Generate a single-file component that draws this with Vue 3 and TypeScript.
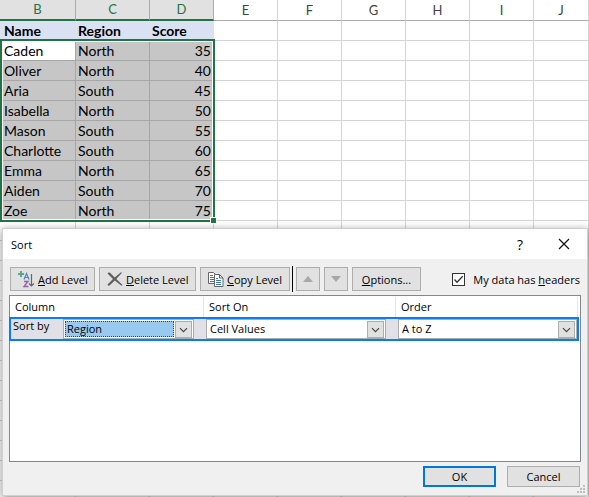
<script setup lang="ts">
import { ref } from 'vue'

const letters = ['B', 'C', 'D', 'E', 'F', 'G', 'H', 'I', 'J']
const people: [string, string, number][] = [
  ['Caden', 'North', 35],
  ['Oliver', 'North', 40],
  ['Aria', 'South', 45],
  ['Isabella', 'North', 50],
  ['Mason', 'South', 55],
  ['Charlotte', 'South', 60],
  ['Emma', 'North', 65],
  ['Aiden', 'South', 70],
  ['Zoe', 'North', 75],
]
const emptyRows = 14
const column = ref('Region')
const sortOn = ref('Cell Values')
const order = ref('A to Z')
const hasHeaders = ref(true)
</script>

<template>
  <main class="workbook">
    <table class="sheet">
      <colgroup>
        <col class="col-name" />
        <col class="col-region" />
        <col v-for="n in 6" :key="n" class="col-std" />
        <col />
      </colgroup>
      <thead>
        <tr>
          <th v-for="(l, i) in letters" :key="l" scope="col" :class="{ picked: i < 3 }">{{ l }}</th>
        </tr>
      </thead>
      <tbody>
        <tr class="titles">
          <td>Name</td><td>Region</td><td>Score</td>
          <td v-for="n in 6" :key="n"></td>
        </tr>
        <tr v-for="(p, r) in people" :key="p[0]">
          <td v-for="(v, c) in p" :key="c" class="sel" :class="{ active: r === 0 && c === 0, num: c === 2 }">{{ v }}</td>
          <td v-for="n in 6" :key="'e' + n"></td>
        </tr>
        <tr v-for="r in emptyRows" :key="r">
          <td v-for="n in 9" :key="n"></td>
        </tr>
      </tbody>
    </table>
    <div class="range"><span class="handle"></span></div>

    <section class="dialog" role="dialog" aria-labelledby="sort-title">
      <header class="titlebar">
        <h1 id="sort-title">Sort</h1>
        <button class="plain help" type="button">?</button>
        <button class="plain" type="button" aria-label="Close">
          <svg width="12" height="12" viewBox="0 0 12 12"><path d="M1 1 11 11M11 1 1 11" stroke="#111" stroke-width="1.2" fill="none" /></svg>
        </button>
      </header>

      <div class="toolbar">
        <button class="btn icon add" type="button">
          <svg width="17" height="18" viewBox="0 0 17 18" fill="none">
            <path d="M3 1v6M0 4h6" stroke="#5fa58c" stroke-width="2" />
            <path d="M6 9.500 8.500 3.500 11 9.500M7 7.500h3" stroke="#4f86bd" stroke-width="1.200" />
            <path d="M6 11.500h4L6 16.500h4.500" stroke="#9a5fb5" stroke-width="1.400" />
            <path d="M13.500 4v12M11 13.500l2.500 2.500 2.500-2.500" stroke="#666" stroke-width="1.200" />
          </svg>
          <span><u>A</u>dd Level</span>
        </button>
        <button class="btn icon delete" type="button">
          <svg width="16" height="14" viewBox="0 0 16 14"><path d="M.5 1.500C1.500 0 3 .5 4 1.700L7.700 5.400 14 .3 15 .8 9.300 6.900 15.500 13l-1 .7L7.800 8.400 2.500 13.500C1 14 0 13 1 12L6 7Z" fill="#5e5e5e" /></svg>
          <span><u>D</u>elete Level</span>
        </button>
        <button class="btn icon copy" type="button">
          <svg width="16" height="15" viewBox="0 0 16 15">
            <path d="M.5.5h5l3 3v8h-8Z" fill="#fff" stroke="#666" />
            <path d="M2 3.500h3M2 5.500h4M2 7.500h4M2 9.500h4" stroke="#3c78b4" />
            <path d="M6.500 2.500h5l3.500 3.500v8.500H6.500Z" fill="#fff" stroke="#666" />
            <path d="M11.500 2.500V6H15" fill="none" stroke="#666" />
            <path d="M8 6.500h2M8 8.500h5M8 10.500h5M8 12.500h5" stroke="#3c78b4" />
          </svg>
          <span><u>C</u>opy Level</span>
        </button>
        <span class="rule"></span>
        <button class="btn arrow" type="button" aria-label="Move up">
          <svg width="10" height="6" viewBox="0 0 10 6"><path d="M5 0 10 6H0Z" fill="#a8a8a8" /></svg>
        </button>
        <button class="btn arrow" type="button" aria-label="Move down">
          <svg width="10" height="6" viewBox="0 0 10 6"><path d="M0 0H10L5 6Z" fill="#a8a8a8" /></svg>
        </button>
        <button class="btn options" type="button"><span><u>O</u>ptions...</span></button>
        <label class="check">
          <span class="tick">
            <input v-model="hasHeaders" type="checkbox" />
            <svg v-if="hasHeaders" width="13" height="13" viewBox="0 0 13 13"><path d="M2.500 6.500 5 9.200 10.700 3.300" fill="none" stroke="#333" stroke-width="1.300" /></svg>
          </span>
          <span>My data has <u>h</u>eaders</span>
        </label>
      </div>

      <div class="levels">
        <div class="heads">
          <span>Column</span><span>Sort On</span><span>Order</span>
        </div>
        <div class="level">
          <label class="by" for="sort-column">Sort by</label>
          <div class="combo chosen">
            <select id="sort-column" v-model="column"><option>Name</option><option>Region</option><option>Score</option></select>
            <svg class="drop" viewBox="0 0 17 17"><path d="M4.500 7 8.500 11 12.500 7" /></svg>
          </div>
          <div class="combo">
            <select v-model="sortOn" aria-label="Sort On"><option>Cell Values</option></select>
            <svg class="drop" viewBox="0 0 17 17"><path d="M4.500 7 8.500 11 12.500 7" /></svg>
          </div>
          <div class="combo">
            <select v-model="order" aria-label="Order"><option>A to Z</option><option>Z to A</option></select>
            <svg class="drop" viewBox="0 0 17 17"><path d="M4.500 7 8.500 11 12.500 7" /></svg>
          </div>
        </div>
      </div>

      <footer class="actions">
        <button class="btn ok" type="button">OK</button>
        <button class="btn" type="button">Cancel</button>
      </footer>
      <svg class="grip" width="8" height="8" viewBox="0 0 8 8"><path d="M6 0h2v2H6ZM3 3h2v2H3ZM6 3h2v2H6ZM0 6h2v2H0ZM3 6h2v2H3ZM6 6h2v2H6Z" fill="#bfbfbf" /></svg>
    </section>
  </main>
</template>

<style>
body { background: #fff; }
</style>

<style scoped>
* { box-sizing: border-box; }
.workbook {
  position: relative;
  height: 100vh;
  overflow: hidden;
  font-family: "Open Sans", "Noto Sans", sans-serif;
  font-size: 11px;
  color: #000;
}
.sheet {
  width: 100%;
  table-layout: fixed;
  border-collapse: separate;
  border-spacing: 0;
  font-family: Lato, "Open Sans", sans-serif;
  font-size: 14px;
  line-height: 19px;
}
.col-name { width: 76px; }
.col-region { width: 74px; }
.col-std { width: 64px; }
.sheet th {
  height: 21px;
  padding: 0;
  border-right: 1px solid #d4d4d4;
  border-bottom: 1px solid #ababab;
  font-size: 13px;
  font-weight: 400;
  color: #444;
}
.sheet th.picked {
  background: #e1e1e1;
  border-right-color: #ababab;
  border-bottom: 2px solid #217346;
  color: #217346;
}
.sheet td {
  height: 20px;
  padding: 0 2px 0 4px;
  border-right: 1px solid #d4d4d4;
  border-bottom: 1px solid #d4d4d4;
  white-space: nowrap;
}
.sheet td + td { padding-left: 2px; }
.titles td { font-weight: 700; }
.titles td:nth-child(-n + 3) {
  background: #d9e1f2;
  border-color: #d9e1f2;
}
.sheet td.sel {
  background: #c6c6c6;
  border-color: #a6a6a6;
}
.sheet td.active { background: #fff; }
.sheet td.num { text-align: right; }
.range {
  position: absolute;
  left: 0;
  top: 39px;
  width: 215px;
  height: 183px;
  border: 2px solid #217346;
  box-shadow: inset 0 0 0 1px #fff;
}
.handle {
  position: absolute;
  right: -4px;
  bottom: -4px;
  width: 7px;
  height: 7px;
  background: #217346;
  border: 1px solid #fff;
}
.dialog {
  position: absolute;
  left: 2px;
  right: 1px;
  top: 228px;
  bottom: 1px;
  display: flex;
  flex-direction: column;
  background: #f0f0f0;
  border: 1px solid #d0d0d0;
  box-shadow: 0 2px 8px rgba(0, 0, 0, 0.45);
}
.titlebar {
  display: flex;
  align-items: center;
  height: 30px;
  padding: 0 11px 0 8px;
  gap: 20px;
  background: #fff;
}
.titlebar h1 {
  flex: 1;
  margin: 0;
  font-size: 11px;
  font-weight: 400;
}
.plain {
  display: grid;
  place-items: center;
  width: 24px;
  height: 24px;
  padding: 0;
  border: 0;
  background: none;
  font: inherit;
}
.help { font-size: 14px; }
.toolbar {
  display: flex;
  align-items: center;
  gap: 4px;
  padding: 7px 7px 2px;
}
.btn {
  display: flex;
  align-items: center;
  justify-content: center;
  gap: 3px;
  height: 24px;
  padding: 0;
  border: 1px solid #adadad;
  background: #e1e1e1;
  font: inherit;
  color: #000;
  white-space: nowrap;
}
.icon {
  justify-content: flex-start;
  padding-left: 7px;
}
.add { width: 85px; }
.delete { width: 97px; }
.copy { width: 90px; }
.options { width: 69px; }
.arrow { width: 24px; }
.rule {
  width: 1px;
  height: 26px;
  margin: 0 -1px 0 -2px;
  background: #000;
}
.check {
  display: flex;
  align-items: center;
  gap: 8px;
  margin-left: auto;
  white-space: nowrap;
}
.tick {
  display: grid;
  width: 13px;
  height: 13px;
}
.tick input {
  grid-area: 1 / 1;
  appearance: none;
  width: 13px;
  height: 13px;
  margin: 0;
  border: 1px solid #333;
  background: #fff;
}
.tick svg {
  grid-area: 1 / 1;
  pointer-events: none;
}
.levels {
  flex: 1;
  margin: 1px 6px 0;
  border: 1px solid #828790;
  background: #fff;
}
.heads {
  display: grid;
  grid-template-columns: 194px 192px 1fr;
  height: 21px;
  padding: 1px 2px 0 0;
}
.heads span {
  padding-left: 5px;
  border-right: 1px solid #e5e5e5;
  line-height: 20px;
}
.level {
  display: grid;
  grid-template-columns: 52px 131px 192px 1fr;
  height: 24px;
  margin: 0 1px 0 -1px;
  border: 2px solid #0a7cf5;
  background: #e0e0e6;
}
.by {
  padding-left: 2px;
  line-height: 13px;
}
.combo {
  display: grid;
  grid-template-columns: 1fr 17px;
  align-items: center;
  padding-right: 1px;
  border: 1px solid #adadad;
  background: #fff;
}
.combo + .combo { margin-left: 12px; }
.combo select {
  grid-area: 1 / 1;
  appearance: none;
  min-width: 0;
  height: 16px;
  margin-left: 1px;
  padding: 0 0 0 2px;
  border: 0;
  border-radius: 0;
  background: #fff;
  color: #000;
  font: inherit;
  line-height: 14px;
}
.chosen select {
  margin-right: 1px;
  padding-left: 1px;
  border: 1px dotted #444;
  background: #99c9ef;
}
.drop {
  width: 17px;
  height: 17px;
  border: 1px solid #adadad;
  background: #e1e1e1;
  pointer-events: none;
}
.drop path {
  fill: none;
  stroke: #444;
  stroke-width: 1.3;
}
.actions {
  display: flex;
  justify-content: flex-end;
  gap: 11px;
  padding: 4px 7px 8px;
}
.actions .btn {
  width: 73px;
  height: 21px;
}
.actions .ok { border: 2px solid #0078d7; }
.grip {
  position: absolute;
  right: 2px;
  bottom: 2px;
}
</style>
